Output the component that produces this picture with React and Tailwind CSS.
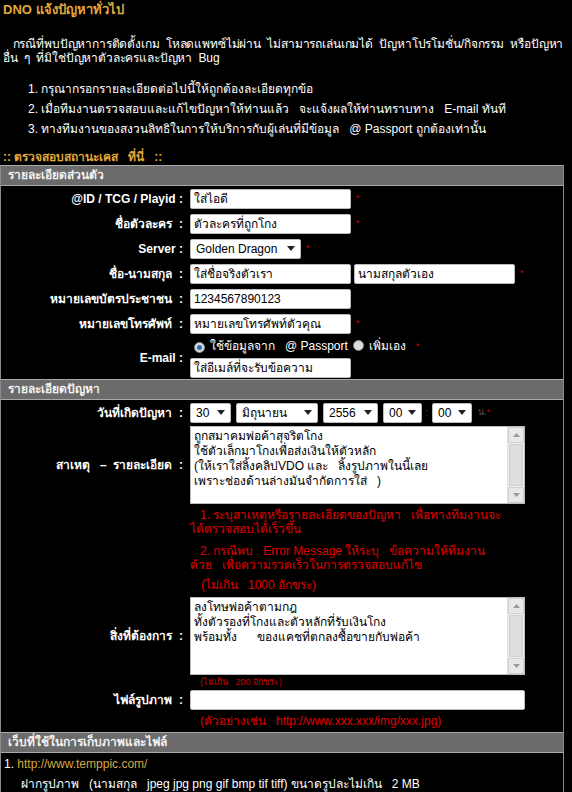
import React from 'react';

const FONT = { fontFamily: 'Tahoma, "Liberation Sans", "Noto Sans", "DejaVu Sans", sans-serif' };

function Star() {
  return <span className="ml-[5px] text-[9px] text-[#d40000]">*</span>;
}

function TextBox({ value, w = 'w-[161px]' }) {
  return (
    <div className={`${w} h-[20px] bg-white border border-[#bcbcbc] rounded-[2px] pl-[3px] text-[12px] leading-[18px] text-black overflow-hidden whitespace-nowrap`}>
      {value}
    </div>
  );
}

function Select({ value, w }) {
  return (
    <div className={`${w} h-[20px] bg-white border border-[#bcbcbc] rounded-[2px] pl-[5px] pr-[5px] flex items-center justify-between text-[12px] text-black`}>
      <span>{value}</span>
      <svg width="8" height="5" viewBox="0 0 8 5"><path d="M0 0h8L4 5z" fill="#222" /></svg>
    </div>
  );
}

function ScrollBox({ lines }) {
  return (
    <div className="w-[335px] h-[78px] bg-white border border-[#bcbcbc] flex">
      <div className="flex-1 pl-[3px] pt-[2px] text-[12px] leading-[15px] text-black whitespace-pre">
        {lines.map((l, i) => <div key={i}>{l}</div>)}
      </div>
      <div className="w-[17px] bg-[#f0f0f0] border-l border-[#e2e2e2] flex flex-col">
        <div className="h-[16px] flex items-center justify-center border border-[#cfcfcf] bg-[#e8e8e8]">
          <svg width="7" height="4" viewBox="0 0 7 4"><path d="M0 4h7L3.5 0z" fill="#9a9a9a" /></svg>
        </div>
        <div className="flex-1 m-[1px] bg-[#dedede] border border-[#cfcfcf]" />
        <div className="h-[16px] flex items-center justify-center border border-[#cfcfcf] bg-[#e8e8e8]">
          <svg width="7" height="4" viewBox="0 0 7 4"><path d="M0 0h7L3.5 4z" fill="#9a9a9a" /></svg>
        </div>
      </div>
    </div>
  );
}

function Row({ label, children, className = 'h-[25px]' }) {
  return (
    <div className={`flex items-center ${className}`}>
      <div className="w-[189px] shrink-0 pr-[7px] text-right text-[12px] font-bold text-white whitespace-pre">
        {label} :
      </div>
      <div className="flex items-center">{children}</div>
    </div>
  );
}

function SectionHead({ children }) {
  return (
    <div className="h-[21px] bg-[#6b6b6b] border-y border-[#a9a9a9] pl-[7px] text-[12px] font-bold leading-[19px] text-[#f2f2f2]">
      {children}
    </div>
  );
}

function Radio({ checked }) {
  return (
    <span className="inline-flex w-[11px] h-[11px] rounded-full border border-[#8a8a8a] bg-[#dcdcdc] items-center justify-center">
      {checked && <span className="w-[5px] h-[5px] rounded-full bg-[#2a6fb8]" />}
    </span>
  );
}

export default function App() {
  return (
    <div className="w-[572px] h-[792px] overflow-hidden bg-black text-white" style={FONT}>
      <div className="pl-[3px] pt-[1px] text-[13px] font-bold text-[#e0a83a] leading-[18px]">DNO แจ้งปัญหาทั่วไป</div>

      <p className="mt-[18px] px-[3px] text-[12px] leading-[14px] tracking-[-0.15px] whitespace-pre">
        {'   กรณีที่พบปัญหาการติดตั้งเกม  โหลดแพทซ์ไม่ผ่าน  ไม่สามารถเล่นเกมได้  ปัญหาโปรโมชั่น/กิจกรรม  หรือปัญหา\nอื่น  ๆ  ที่มิใช่ปัญหาตัวละครและปัญหา  Bug'}
      </p>

      <ol className="mt-[14px] pl-[28px] text-[12px] leading-[20px] whitespace-pre">
        <li>1. กรุณากรอกรายละเอียดต่อไปนี้ให้ถูกต้องละเอียดทุกข้อ</li>
        <li>2. เมื่อทีมงานตรวจสอบและแก้ไขปัญหาให้ท่านแล้ว   จะแจ้งผลให้ท่านทราบทาง   E-mail ทันที</li>
        <li>3. ทางทีมงานของสงวนลิทธิในการให้บริการกับผู้เล่นที่มีข้อมูล   @ Passport ถูกต้องเท่านั้น</li>
      </ol>

      <div className="mt-[10px] pl-[3px] text-[12px] font-bold text-[#e0a83a] leading-[16px] whitespace-pre">
        {':: ตรวจสอบสถานะเคส   ที่นี่   ::'}
      </div>

      <div className="w-[564px] border-x border-[#8a8a8a]">
        <SectionHead>รายละเอียดส่วนตัว</SectionHead>
        <Row label="@ID / TCG / Playid"><TextBox value="ใส่ไอดี" /><Star /></Row>
        <Row label="ชื่อตัวละคร "><TextBox value="ตัวละครที่ถูกโกง" /><Star /></Row>
        <Row label="Server"><Select value="Golden Dragon" w="w-[111px]" /><Star /></Row>
        <Row label="ชื่อ-นามสกุล "><TextBox value="ใส่ชื่อจริงตัวเรา" /><span className="w-[3px]" /><TextBox value="นามสกุลตัวเอง" /><Star /></Row>
        <Row label="หมายเลขบัตรประชาชน "><TextBox value="1234567890123" /></Row>
        <Row label="หมายเลขโทรศัพท์ "><TextBox value="หมายเลขโทรศัพท์ตัวคุณ" /><Star /></Row>
        <Row label="E-mail" className="h-[43px]">
          <div className="flex flex-col gap-[4px]">
            <div className="flex items-center gap-[5px] text-[12px] leading-[16px] whitespace-pre">
              <span className="ml-[4px]"><Radio checked /></span>
              <span>ใช้ข้อมูลจาก   @ Passport</span>
              <Radio />
              <span>เพิ่มเอง</span>
              <Star />
            </div>
            <TextBox value="ใส่อีเมล์ที่จะรับข้อความ" />
          </div>
        </Row>

        <SectionHead>รายละเอียดปัญหา</SectionHead>
        <Row label="วันที่เกิดปัญหา ">
          <Select value="30" w="w-[41px]" />
          <span className="w-[5px]" />
          <Select value="มิถุนายน" w="w-[82px]" />
          <span className="w-[5px]" />
          <Select value="2556" w="w-[55px]" />
          <span className="w-[5px]" />
          <Select value="00" w="w-[39px]" />
          <span className="w-[10px] text-center text-[10px] text-[#333]">:</span>
          <Select value="00" w="w-[40px]" />
          <span className="ml-[6px] text-[9px] text-[#555]">น.</span>
          <span className="text-[9px] text-[#d40000]">*</span>
        </Row>
        <Row label="สาเหตุ   –  รายละเอียด " className="h-[80px]">
          <ScrollBox
            lines={[
              'ถูกสมาคมพ่อค้าสุจริตโกง',
              'ใช้ตัวเล็กมาโกงเพื่อส่งเงินให้ตัวหลัก',
              '(ให้เราใส่ลิ้งคลิปVDO และ   ลิ้งรูปภาพในนี้เลย',
              'เพราะช่องด้านล่างมันจำกัดการใส่   )',
            ]}
          />
        </Row>
        <div className="ml-[189px] text-[12px] leading-[14px] text-[#e00000] whitespace-pre">
          <p className="mt-[3px]">{'   1. ระบุสาเหตุหรือรายละเอียดของปัญหา   เพื่อทางทีมงานจะ\nได้ตรวจสอบได้เร็วขึ้น'}</p>
          <p className="mt-[8px]">{'   2. กรณีพบ   Error Message ให้ระบุ   ข้อความให้ทีมงาน\nด้วย   เพื่อความรวดเร็วในการตรวจสอบแก้ไข'}</p>
          <p className="mt-[6px] pl-[11px]">(ไม่เกิน   1000 อักขระ)</p>
        </div>
        <Row label="สิ่งที่ต้องการ " className="h-[80px] mt-[4px]">
          <ScrollBox
            lines={[
              'ลงโทษพ่อค้าตามกฎ',
              'ทั้งตัวรองที่โกงและตัวหลักที่รับเงินโกง',
              'พร้อมทั้ง      ของแคชที่ตกลงซื้อขายกับพ่อค้า',
            ]}
          />
        </Row>
        <div className="ml-[199px] text-[9px] leading-[13px] text-[#d00000] whitespace-pre">(ไม่เกิน   200 อักขระ)</div>
        <Row label="ไฟล์รูปภาพ " className="h-[22px]">
          <TextBox value="" w="w-[335px]" />
        </Row>
        <div className="ml-[199px] h-[21px] text-[12px] leading-[20px] text-[#e00000] whitespace-pre">
          (ตัวอย่างเช่น   http://www.xxx.xxx/img/xxx.jpg)
        </div>

        <SectionHead>เว็บที่ใช้ในการเก็บภาพและไฟล์</SectionHead>
        <div className="pt-[1px] pl-[3px] text-[12px] leading-[20px] whitespace-pre">
          <div>1. <span className="text-[#d8a842]">http://www.temppic.com/</span></div>
          <div className="pl-[17px]">ฝากรูปภาพ   (นามสกุล   jpeg jpg png gif bmp tif tiff) ขนาดรูปละไม่เกิน   2 MB</div>
        </div>
      </div>
    </div>
  );
}
